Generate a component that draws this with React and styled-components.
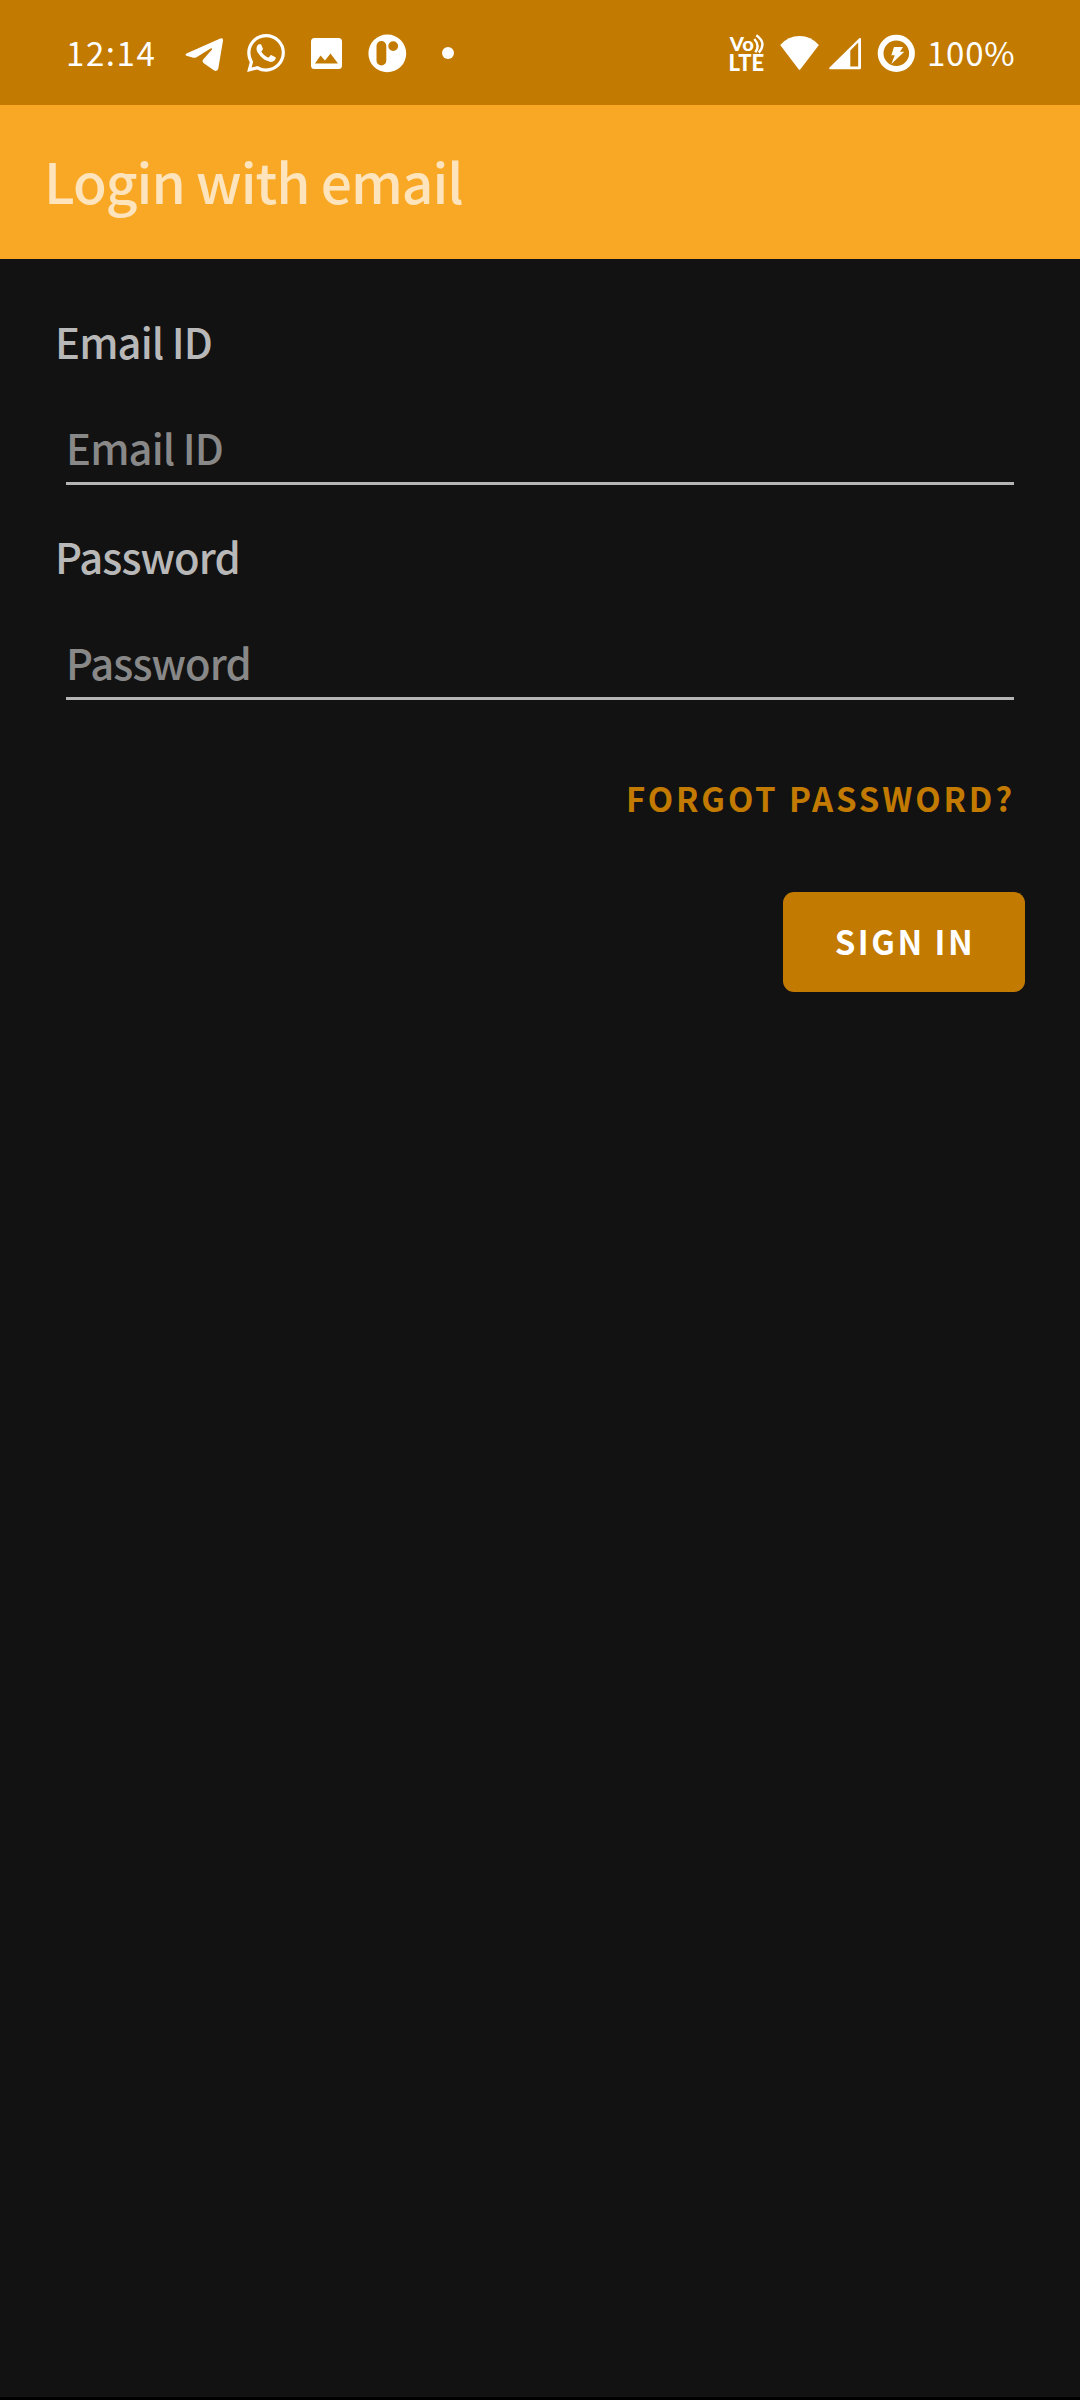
import React from "react";
import styled, { createGlobalStyle } from "styled-components";

const Global = createGlobalStyle`
  * { box-sizing: border-box; }
  body { margin: 0; background: #121212; font-family: "Noto Sans CJK JP", "Noto Sans", sans-serif; }
`;

const Screen = styled.div`
  width: 1080px;
  height: 2400px;
  display: flex;
  flex-direction: column;
  background: #121212;
  border-bottom: 3px solid #000;
  overflow: hidden;
`;

const StatusBar = styled.header`
  height: 105px;
  flex: none;
  display: flex;
  justify-content: space-between;
  padding: 33px 64px 0 66px;
  background: #c27a00;
  color: #fff;
`;

const StatusGroup = styled.div`
  display: flex;
  align-items: center;
  height: 40px;
`;

const StatusText = styled.span`
  width: ${(p) => p.$width}px;
  font-size: 33px;
  line-height: 38px;
  height: 40px;
  letter-spacing: ${(p) => p.$spacing}px;
  white-space: nowrap;
`;

const Icon = styled.svg`
  width: ${(p) => p.$width || 40}px;
  height: 40px;
  margin-left: ${(p) => p.$gap || 0}px;
  margin-right: ${(p) => p.$after || 0}px;
  flex: none;
  fill: #fff;
`;

const BadgeText = styled.text`
  font-family: Lato, "Liberation Sans", sans-serif;
  font-weight: 900;
  font-size: ${(p) => p.$size}px;
`;

const AppBar = styled.div`
  height: 154px;
  flex: none;
  padding-left: 44px;
  background: #f9a825;
`;

const Title = styled.h1`
  margin: 0;
  font-size: 55px;
  font-weight: 500;
  line-height: 150px;
  letter-spacing: -1px;
  color: #fee4bc;
  white-space: nowrap;
`;

const Form = styled.main`
  display: flex;
  flex-direction: column;
  padding: 52px 55px 0;
`;

const Label = styled.label`
  height: 60px;
  font-size: 41.7px;
  font-weight: 500;
  line-height: 60px;
  letter-spacing: -0.88px;
  color: #b8b8b8;
`;

const Input = styled.input`
  height: 68px;
  margin: 46px 11px 41px;
  padding: 0 0 5px;
  border: 0;
  border-bottom: 3px solid #b5b5b5;
  border-radius: 0;
  outline: 0;
  background: transparent;
  font: 500 41.7px "Noto Sans CJK JP", "Noto Sans", sans-serif;
  letter-spacing: -0.88px;
  color: #fff;
  &::placeholder { color: #888; opacity: 1; }
`;

const Actions = styled.div`
  display: flex;
  flex-direction: column;
  align-items: flex-end;
`;

const TextButton = styled.button`
  height: 60px;
  margin: 27px 10px 64px 0;
  padding: 0;
  border: 0;
  background: none;
  font: 700 33px/60px "Noto Sans CJK JP", "Noto Sans", sans-serif;
  letter-spacing: 2.85px;
  color: #c27a00;
`;

const FilledButton = styled.button`
  width: 242px;
  height: 100px;
  padding: 0 0 2px 2px;
  border: 0;
  border-radius: 11px;
  background: #c27a00;
  font: 700 33px/60px "Noto Sans CJK JP", "Noto Sans", sans-serif;
  letter-spacing: 2.5px;
  color: #fff;
`;

const Telegram = () => (
  <Icon viewBox="184 33 40 40" $gap={0}>
    <path d="M187 53.2 220.3 38.4Q223.3 37.5 223 40.5L218.3 68.6Q217.3 72 214.2 70.6L203.8 63.2Q201.5 61.2 203.4 59.3L212 49.5Q212.4 47.9 210.6 48.4L196.5 57.3Q194.6 58.2 192.5 57.6L186.4 55.7Q184.4 54.6 187 53.2Z" />
  </Icon>
);

const WhatsApp = () => (
  <Icon viewBox="0 0 24 24" $width={38} $gap={22.5}>
    <path d="M17.472 14.382c-.297-.149-1.758-.867-2.03-.967-.273-.099-.471-.148-.67.15-.197.297-.767.966-.94 1.164-.173.199-.347.223-.644.075-.297-.15-1.255-.463-2.39-1.475-.883-.788-1.48-1.761-1.653-2.059-.173-.297-.018-.458.13-.606.134-.133.298-.347.446-.52.149-.174.198-.298.298-.497.099-.198.05-.371-.025-.52-.075-.149-.669-1.612-.916-2.207-.242-.579-.487-.5-.669-.51-.173-.008-.371-.01-.57-.01-.198 0-.52.074-.792.372-.272.297-1.04 1.016-1.04 2.479 0 1.462 1.065 2.875 1.213 3.074.149.198 2.096 3.2 5.077 4.487.709.306 1.262.489 1.694.625.712.227 1.36.195 1.871.118.571-.085 1.758-.719 2.006-1.413.248-.694.248-1.289.173-1.413-.074-.124-.272-.198-.57-.347m-5.421 7.403h-.004a9.87 9.87 0 01-5.031-1.378l-.361-.214-3.741.982.998-3.648-.235-.374a9.86 9.86 0 01-1.51-5.26c.001-5.45 4.436-9.884 9.888-9.884 2.64 0 5.122 1.03 6.988 2.898a9.825 9.825 0 012.893 6.994c-.003 5.45-4.437 9.884-9.885 9.884m8.413-18.297A11.815 11.815 0 0012.05 0C5.495 0 .16 5.335.157 11.892c0 2.096.547 4.142 1.588 5.945L.057 24l6.305-1.654a11.882 11.882 0 005.683 1.448h.005c6.554 0 11.89-5.335 11.893-11.893a11.821 11.821 0 00-3.48-8.413z" />
  </Icon>
);

const Picture = () => (
  <Icon viewBox="307 33 40 40" $gap={22.5}>
    <path fillRule="evenodd" d="M314.5 38H338.5Q342 38 342 41.5V65.5Q342 69 338.5 69H314.5Q311 69 311 65.5V41.5Q311 38 314.5 38ZM315 63.5H338L330.5 53.5 325 60.5 320.5 55.5Z" />
  </Icon>
);

const Pushbullet = () => (
  <Icon viewBox="367 33 40 40" $gap={20}>
    <path fillRule="evenodd" d="M387.3 34.5a18.9 18.9 0 1 1 0 37.8 18.9 18.9 0 1 1 0-37.8ZM376.5 46V60.5a4.9 4.9 0 0 0 9.8 0V46a4.9 4.9 0 0 0-9.8 0ZM393.2 41.2a4.9 4.9 0 1 0 0 9.8 4.9 4.9 0 1 0 0-9.8Z" />
  </Icon>
);

const MoreDot = () => (
  <Icon viewBox="428 33 40 40" $gap={21}>
    <circle cx="448" cy="53" r="6" />
  </Icon>
);

const VoLte = () => (
  <Icon viewBox="726 33 40 40">
    <BadgeText $size={18.5} x="729.8" y="51.2" textLength="24.2" lengthAdjust="spacingAndGlyphs">Vo</BadgeText>
    <BadgeText $size={21.8} x="728.6" y="71" textLength="35.4" lengthAdjust="spacingAndGlyphs">LTE</BadgeText>
    <path
      d="M754.3 39Q760.3 45.5 755.3 52.3M756.3 35.2Q767.2 43 758.8 52.6"
      fill="none"
      stroke="#fff"
      strokeWidth="2.4"
    />
  </Icon>
);

const Wifi = () => (
  <Icon viewBox="780 33 40 40" $gap={13.5}>
    <path d="M780.2 45Q788 36 799.5 36T818.9 45L800.4 69.2Q799.5 70.3 798.6 69.2Z" />
  </Icon>
);

const Signal = () => (
  <Icon viewBox="828 33 36 40" $width={36} $gap={8.5}>
    <path fillRule="evenodd" d="M859.5 38Q861 37.6 861 39V68Q861 69.3 859.7 69.3H830Q828.3 69 829.5 67.6ZM850.3 50.5V66.5H858.2V42.6Z" />
  </Icon>
);

const Charging = () => (
  <Icon viewBox="876 33 40 40" $gap={12} $after={11}>
    <circle cx="896.3" cy="53.3" r="15.7" fill="none" stroke="#fff" strokeWidth="5.8" />
    <path d="M894 47H903L900 51.8H904.3L891.3 64 894.8 55.3H891.3Z" />
  </Icon>
);

const Field = ({ id, label, type }) => (
  <>
    <Label htmlFor={id}>{label}</Label>
    <Input id={id} type={type} placeholder={label} />
  </>
);

export default function App() {
  return (
    <Screen>
      <Global />
      <StatusBar>
        <StatusGroup>
          <StatusText $width={118} $spacing={1.6}>12:14</StatusText>
          <Telegram />
          <WhatsApp />
          <Picture />
          <Pushbullet />
          <MoreDot />
        </StatusGroup>
        <StatusGroup>
          <VoLte />
          <Wifi />
          <Signal />
          <Charging />
          <StatusText $width={89} $spacing={0.8}>100%</StatusText>
        </StatusGroup>
      </StatusBar>
      <AppBar>
        <Title>Login with email</Title>
      </AppBar>
      <Form>
        <Field id="email" label="Email ID" type="email" />
        <Field id="password" label="Password" type="password" />
        <Actions>
          <TextButton>FORGOT PASSWORD?</TextButton>
          <FilledButton>SIGN IN</FilledButton>
        </Actions>
      </Form>
    </Screen>
  );
}
